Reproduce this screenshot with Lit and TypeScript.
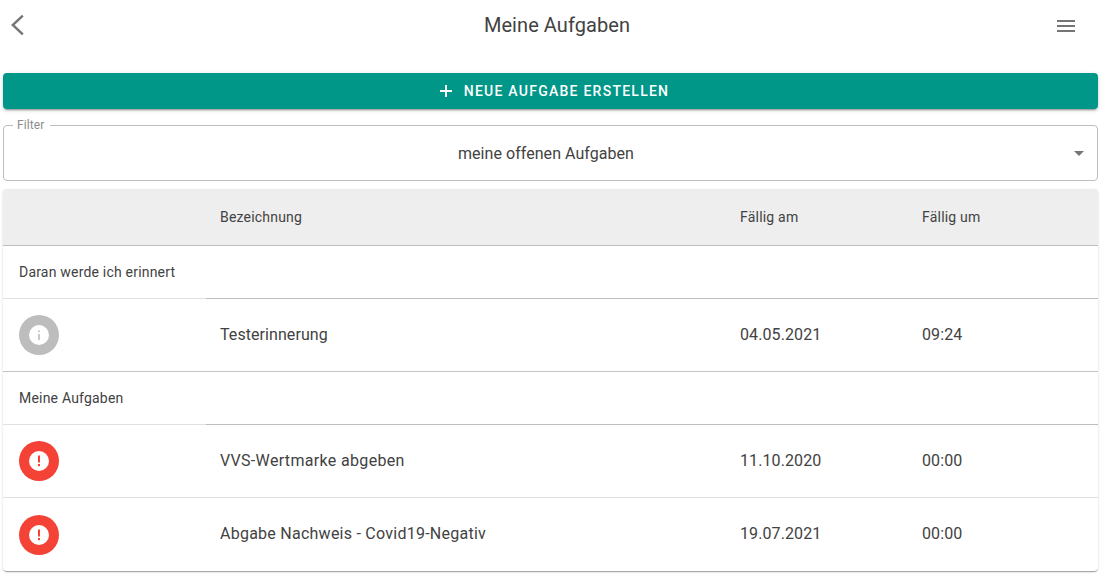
import { LitElement, html, css, svg } from "lit";
import { customElement } from "lit/decorators.js";

const info = svg`<circle cx="20" cy="20" r="20" fill="#bdbdbd"/><circle cx="20" cy="20" r="10" fill="#fff"/><rect x="19.2" y="19" width="1.6" height="6" fill="#bdbdbd"/><rect x="19.2" y="15.5" width="1.6" height="1.8" fill="#bdbdbd"/>`;
const alert = svg`<circle cx="20" cy="20" r="20" fill="#f44336"/><circle cx="20" cy="20" r="10" fill="#fff"/><rect x="19" y="14.5" width="2" height="7" fill="#f44336"/><rect x="19" y="23" width="2" height="2.2" fill="#f44336"/>`;

@customElement("app-root")
export class AppRoot extends LitElement {
  static styles = css`
    :host { display: block; width: 1105px; height: 577px; overflow: hidden; background: #fff; font-family: Roboto, "Liberation Sans", sans-serif; color: #424242; box-sizing: border-box; padding: 0 7px 0 3px; }
    * { box-sizing: border-box; }
    .top { height: 73px; }
    .top-inner { height: 50px; display: flex; align-items: center; justify-content: space-between; }
    .title { font-size: 20px; letter-spacing: .07px; color: #424242; margin-left: 32px; }
    .back { display: block; width: 16px; height: 24px; margin-left: 6px; }
    .menu { display: block; width: 18px; height: 12px; margin-right: 23px; margin-top: 1px; }
    .btn { height: 36px; background: #009688; color: #fff; border-radius: 4px; display: flex; align-items: center; justify-content: center; gap: 11px; padding-left: 7px; font-size: 14px; font-weight: 500; letter-spacing: 1.25px; box-shadow: 0 3px 1px -2px rgba(0,0,0,.2), 0 2px 2px 0 rgba(0,0,0,.14), 0 1px 5px 0 rgba(0,0,0,.12); margin-bottom: 16px; }
    .btn svg { display: block; width: 14px; height: 14px; }
    .filter { position: relative; height: 56px; border: 1px solid #bdbdbd; border-radius: 4px; display: flex; align-items: center; justify-content: center; font-size: 16px; letter-spacing: .05px; margin-bottom: 8px; padding: 1px 9px 0 0; }
    .legend { position: absolute; left: 9px; top: -8px; padding: 0 6px 0 4px; background: #fff; font-size: 12px; line-height: 14px; letter-spacing: .1px; color: #8e8e8e; }
    .caret { position: absolute; right: 13px; top: 25px; width: 0; height: 0; border-left: 5px solid transparent; border-right: 5px solid transparent; border-top: 5px solid #757575; }
    .table { border-radius: 4px; overflow: hidden; box-shadow: 0 2px 1px -1px rgba(0,0,0,.2), 0 1px 1px 0 rgba(0,0,0,.14), 0 1px 3px 0 rgba(0,0,0,.12); }
    .row { display: grid; grid-template-columns: 203px 520px 182px 1fr; align-items: center; }
    .row > :not(.lead) { padding-left: 14px; }
    .head { height: 57px; background: #eee; font-size: 14px; letter-spacing: .2px; border-bottom: 1px solid #bdbdbd; padding-bottom: 1px; }
    .section { height: 53px; font-size: 14px; letter-spacing: .2px; padding-left: 16px; display: flex; align-items: center; position: relative; border-bottom: 1px solid #bdbdbd; }
    .section::after { content: ""; position: absolute; left: 0; bottom: -1px; width: 203px; height: 1px; background: #e0e0e0; }
    .data { height: 73px; font-size: 16px; letter-spacing: .1px; border-bottom: 1px solid #e0e0e0; }
    .data.strong { border-bottom-color: #c4c4c4; }
    .data.last { border-bottom: 0; }
    .data > :not(.lead) { padding-bottom: 2px; }
    .lead { padding-left: 16px; display: flex; }
    .lead svg { display: block; width: 40px; height: 40px; }
    .name-a { letter-spacing: .07px; }
    .name-b { letter-spacing: .33px; }
    .name-c { letter-spacing: .25px; }
  `;

  private dataRow(icon: unknown, name: string, date: string, time: string, nameCls: string, cls = "") {
    return html`<div class="row data ${cls}">
      <div class="lead"><svg viewBox="0 0 40 40">${icon}</svg></div>
      <div class="${nameCls}">${name}</div><div>${date}</div><div>${time}</div>
    </div>`;
  }

  render() {
    return html`
      <div class="top"><div class="top-inner">
        <svg class="back" viewBox="0 0 16 24"><path d="M13.8 2.7 L3.8 12 L13.8 21.3" fill="none" stroke="#757575" stroke-width="2.4"/></svg>
        <div class="title">Meine Aufgaben</div>
        <svg class="menu" viewBox="0 0 18 12"><path d="M0 0h18v2H0zM0 5h18v2H0zM0 10h18v2H0z" fill="#757575"/></svg>
      </div></div>
      <div class="btn">
        <svg viewBox="0 0 14 14"><path d="M6 1h2v5h5v2H8v5H6V8H1V6h5z" fill="#fff"/></svg>
        <span>NEUE AUFGABE ERSTELLEN</span>
      </div>
      <div class="filter">
        <span class="legend">Filter</span>
        <span>meine offenen Aufgaben</span>
        <span class="caret"></span>
      </div>
      <div class="table">
        <div class="row head"><div class="lead"></div><div>Bezeichnung</div><div>Fällig am</div><div>Fällig um</div></div>
        <div class="section">Daran werde ich erinnert</div>
        ${this.dataRow(info, "Testerinnerung", "04.05.2021", "09:24", "name-a", "strong")}
        <div class="section">Meine Aufgaben</div>
        ${this.dataRow(alert, "VVS-Wertmarke abgeben", "11.10.2020", "00:00", "name-b")}
        ${this.dataRow(alert, "Abgabe Nachweis - Covid19-Negativ", "19.07.2021", "00:00", "name-c", "last")}
      </div>
    `;
  }
}
